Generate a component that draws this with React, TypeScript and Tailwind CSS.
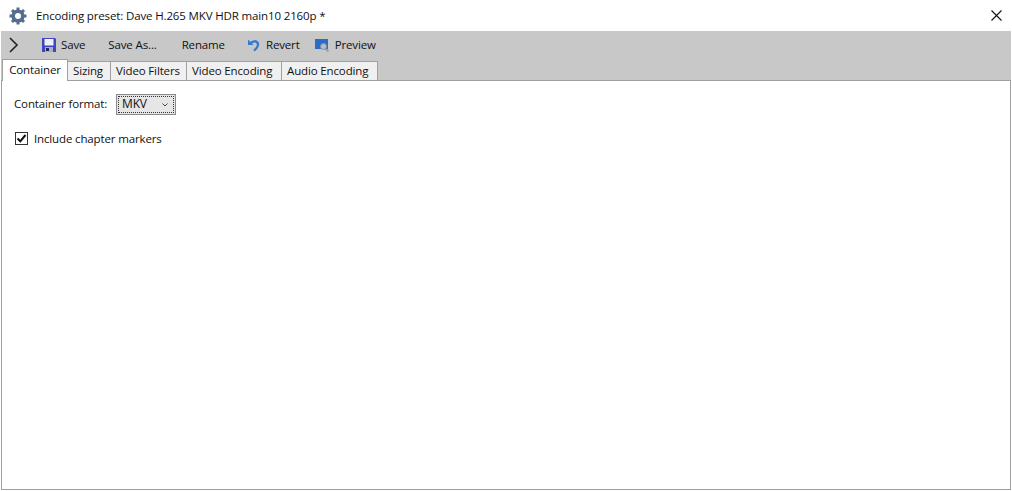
import React from 'react';

const FONT = 'font-["Open_Sans","Noto_Sans",sans-serif]';

const IconGear = () => (
  <svg width="18" height="18" viewBox="0 0 18 18" fill="none" xmlns="http://www.w3.org/2000/svg">
    <circle cx="9" cy="9" r="4.800" stroke="#566d8e" strokeWidth="3.600" />
    <path d="M9 0.500v3M9 14.500v3M0.500 9h3M14.500 9h3M3 3l2.100 2.100M12.900 12.900L15 15M3 15l2.100-2.100M12.900 5.100L15 3" stroke="#566d8e" strokeWidth="3" />
  </svg>
);

const IconSave = () => (
  <svg width="14" height="14" viewBox="0 0 14 14" xmlns="http://www.w3.org/2000/svg">
    <path d="M0 0h13l1 1v13H0z" fill="#3d48c0" />
    <rect x="2.500" y="1" width="9" height="6.500" fill="#eef0f6" />
    <rect x="3" y="9" width="8" height="5" fill="#aab0c4" />
    <rect x="4" y="10" width="3" height="3" fill="#20265e" />
  </svg>
);

const IconRevert = () => (
  <svg width="12" height="14" viewBox="0 0 12 14" fill="none" xmlns="http://www.w3.org/2000/svg">
    <path d="M0 1.500v5.500h5.500z" fill="#3a78cc" />
    <path d="M2.500 5.500c2-2.500 5.500-3 7-0.800 1.300 2-0.500 5.500-3.500 8" stroke="#3a78cc" strokeWidth="2.400" />
  </svg>
);

const IconPreview = () => (
  <svg width="14" height="14" viewBox="0 0 14 14" fill="none" xmlns="http://www.w3.org/2000/svg">
    <rect x="0" y="1" width="13" height="10" fill="#2a6cc6" />
    <circle cx="8.500" cy="8.500" r="3" fill="#b4c0cc" stroke="#87929c" />
    <path d="M10.500 10.500l3 3" stroke="#87929c" strokeWidth="1.500" />
  </svg>
);

const TOOLBAR = [
  { label: 'Save', icon: <IconSave />, cls: 'ml-[22px] gap-[5px]' },
  { label: 'Save As...', cls: 'ml-[23px]' },
  { label: 'Rename', cls: 'ml-[25px]' },
  { label: 'Revert', icon: <IconRevert />, cls: 'ml-[23px] gap-[6px]' },
  { label: 'Preview', icon: <IconPreview />, cls: 'ml-[15px] gap-[6px]' },
];

const TABS = [
  { label: 'Sizing', cls: 'w-[43px]' },
  { label: 'Video Filters', cls: 'w-[76px]' },
  { label: 'Video Encoding', cls: 'w-[95px]' },
  { label: 'Audio Encoding', cls: 'w-[96px]' },
];

export default function App() {
  return (
    <div className={`${FONT} w-[1012px] h-[491px] bg-white text-[11.5px] tracking-[-0.14px] text-[#111] flex flex-col overflow-hidden`}>
      <div className="h-[31px] flex items-center pl-[9px] pr-[10px]">
        <IconGear />
        <span className="ml-[9px]">Encoding preset: Dave H.265 MKV HDR main10 2160p *</span>
        <svg className="ml-auto" width="11" height="11" viewBox="0 0 11 11" fill="none" xmlns="http://www.w3.org/2000/svg">
          <path d="M0.500 0.500l10 10M10.500 0.500l-10 10" stroke="#111" strokeWidth="1.100" />
        </svg>
      </div>

      <div className="mx-px h-[28px] bg-[#c8c8c8] flex items-center pl-[7px]">
        <svg width="12" height="16" viewBox="0 0 12 16" fill="none" xmlns="http://www.w3.org/2000/svg">
          <path d="M2 1l7 7-7 7" stroke="#222" strokeWidth="1.600" />
        </svg>
        {TOOLBAR.map((t) => (
          <div key={t.label} className={`flex items-center ${t.cls}`}>
            {t.icon}
            <span className="pb-px">{t.label}</span>
          </div>
        ))}
      </div>

      <div className="mx-px h-[21px] bg-[#c8c8c8] flex items-end pl-[1px] relative z-10">
        <div className="h-[22px] w-[66px] bg-white border border-b-0 border-[#a0a0a0] flex items-center justify-center -mb-px pb-[2px]">Container</div>
        {TABS.map((t) => (
          <div key={t.label} className={`h-[19px] pl-[5px] bg-[#f0f0f0] border border-b-0 border-l-0 border-[#a0a0a0] flex items-center ${t.cls}`}>{t.label}</div>
        ))}
      </div>

      <div className="flex-1 mx-px mb-px bg-white border border-[#a0a0a0] pl-[12px] pt-[13px]">
        <div className="flex items-center h-[21px]">
          <span className="w-[102px] pb-[2px]">Container format:</span>
          <div className="w-[60px] h-[21px] border border-[#8a8a8a] bg-[#e6e6e6] p-px">
            <div className="h-full border border-dotted border-[#333] flex items-center justify-between pl-[3px] pr-[5px]">
              <span className="text-[12px] pb-[2px]">MKV</span>
              <svg width="6" height="4" viewBox="0 0 6 4" fill="none" xmlns="http://www.w3.org/2000/svg">
                <path d="M0.500 0.500l2.500 2.500 2.500-2.500" stroke="#444" />
              </svg>
            </div>
          </div>
        </div>
        <div className="flex items-center mt-[15px] ml-px">
          <div className="w-[13px] h-[13px] border border-[#333] flex items-center justify-center">
            <svg width="11" height="11" viewBox="0 0 11 11" fill="none" xmlns="http://www.w3.org/2000/svg">
              <path d="M1.500 5.500l2.800 2.800 5.200-6.300" stroke="#111" strokeWidth="2" />
            </svg>
          </div>
          <span className="ml-[6px]">Include chapter markers</span>
        </div>
      </div>
    </div>
  );
}
